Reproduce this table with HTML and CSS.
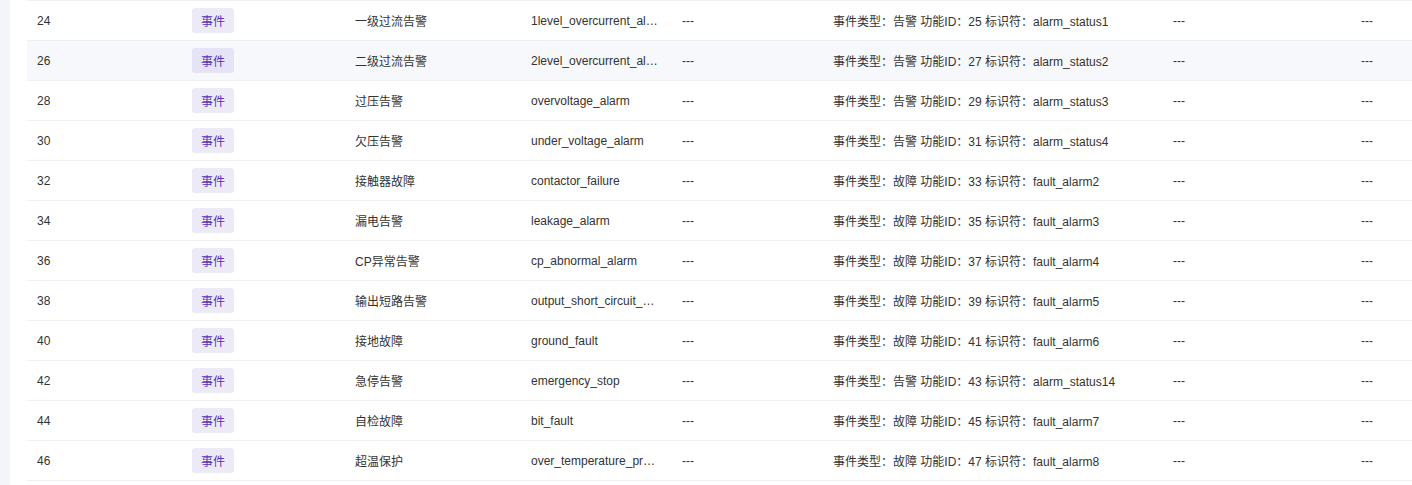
FILE: index.html
```html
<!DOCTYPE html>
<html lang="zh-CN">
<head>
<meta charset="utf-8">
<title>事件列表</title>
<link rel="stylesheet" href="styles.css">
</head>
<body>
<div class="page">
  <div class="side"></div>
  <div class="table">
    <div class="row"><div class="c">24</div><div class="c"><span class="tag">事件</span></div><div class="c">一级过流告警</div><div class="c ell">1level_overcurrent_alarm</div><div class="c">---</div><div class="c">事件类型：告警 功能ID：25 标识符：alarm_status1</div><div class="c">---</div><div class="c">---</div></div>
    <div class="row hover"><div class="c">26</div><div class="c"><span class="tag">事件</span></div><div class="c">二级过流告警</div><div class="c ell">2level_overcurrent_alarm</div><div class="c">---</div><div class="c">事件类型：告警 功能ID：27 标识符：alarm_status2</div><div class="c">---</div><div class="c">---</div></div>
    <div class="row"><div class="c">28</div><div class="c"><span class="tag">事件</span></div><div class="c">过压告警</div><div class="c ell">overvoltage_alarm</div><div class="c">---</div><div class="c">事件类型：告警 功能ID：29 标识符：alarm_status3</div><div class="c">---</div><div class="c">---</div></div>
    <div class="row"><div class="c">30</div><div class="c"><span class="tag">事件</span></div><div class="c">欠压告警</div><div class="c ell">under_voltage_alarm</div><div class="c">---</div><div class="c">事件类型：告警 功能ID：31 标识符：alarm_status4</div><div class="c">---</div><div class="c">---</div></div>
    <div class="row"><div class="c">32</div><div class="c"><span class="tag">事件</span></div><div class="c">接触器故障</div><div class="c ell">contactor_failure</div><div class="c">---</div><div class="c">事件类型：故障 功能ID：33 标识符：fault_alarm2</div><div class="c">---</div><div class="c">---</div></div>
    <div class="row"><div class="c">34</div><div class="c"><span class="tag">事件</span></div><div class="c">漏电告警</div><div class="c ell">leakage_alarm</div><div class="c">---</div><div class="c">事件类型：故障 功能ID：35 标识符：fault_alarm3</div><div class="c">---</div><div class="c">---</div></div>
    <div class="row"><div class="c">36</div><div class="c"><span class="tag">事件</span></div><div class="c">CP异常告警</div><div class="c ell">cp_abnormal_alarm</div><div class="c">---</div><div class="c">事件类型：故障 功能ID：37 标识符：fault_alarm4</div><div class="c">---</div><div class="c">---</div></div>
    <div class="row"><div class="c">38</div><div class="c"><span class="tag">事件</span></div><div class="c">输出短路告警</div><div class="c ell">output_short_circuit_alarm</div><div class="c">---</div><div class="c">事件类型：故障 功能ID：39 标识符：fault_alarm5</div><div class="c">---</div><div class="c">---</div></div>
    <div class="row"><div class="c">40</div><div class="c"><span class="tag">事件</span></div><div class="c">接地故障</div><div class="c ell">ground_fault</div><div class="c">---</div><div class="c">事件类型：故障 功能ID：41 标识符：fault_alarm6</div><div class="c">---</div><div class="c">---</div></div>
    <div class="row"><div class="c">42</div><div class="c"><span class="tag">事件</span></div><div class="c">急停告警</div><div class="c ell">emergency_stop</div><div class="c">---</div><div class="c">事件类型：告警 功能ID：43 标识符：alarm_status14</div><div class="c">---</div><div class="c">---</div></div>
    <div class="row"><div class="c">44</div><div class="c"><span class="tag">事件</span></div><div class="c">自检故障</div><div class="c ell">bit_fault</div><div class="c">---</div><div class="c">事件类型：故障 功能ID：45 标识符：fault_alarm7</div><div class="c">---</div><div class="c">---</div></div>
    <div class="row"><div class="c">46</div><div class="c"><span class="tag">事件</span></div><div class="c">超温保护</div><div class="c ell">over_temperature_protection</div><div class="c">---</div><div class="c">事件类型：故障 功能ID：47 标识符：fault_alarm8</div><div class="c">---</div><div class="c">---</div></div>
  </div>
</div>
</body>
</html>
```

FILE: styles.css
```css
html, body {
  margin: 0;
  padding: 0;
  background: #ffffff;
}
body {
  font-family: "Liberation Sans", "Noto Sans CJK SC", sans-serif;
  font-size: 12px;
  color: #333333;
}
.page {
  display: flex;
  height: 485px;
}
.side {
  width: 10px;
  flex: none;
  background: #f4f5f9;
}
.table {
  flex: 1;
  margin-left: 17px;
  border-top: 1px solid #eef0f4;
  align-self: flex-start;
}
.row {
  display: grid;
  grid-template-columns: 155px 163px 176px 151px 151px 340px 188px 1fr;
  height: 40px;
  box-sizing: border-box;
  border-bottom: 1px solid #eef0f4;
  align-items: center;
}
.row.hover {
  background: #f7f8fc;
}
.c {
  padding: 0 10px;
  white-space: nowrap;
  overflow: hidden;
  min-width: 0;
}
.ell {
  text-overflow: ellipsis;
  padding-right: 14px;
}
.tag {
  display: inline-flex;
  align-items: center;
  height: 25px;
  padding: 0 9px;
  border-radius: 3px;
  background: rgba(88, 60, 190, 0.11);
  color: #5434b8;
  font-size: 12px;
  vertical-align: middle;
}
```
